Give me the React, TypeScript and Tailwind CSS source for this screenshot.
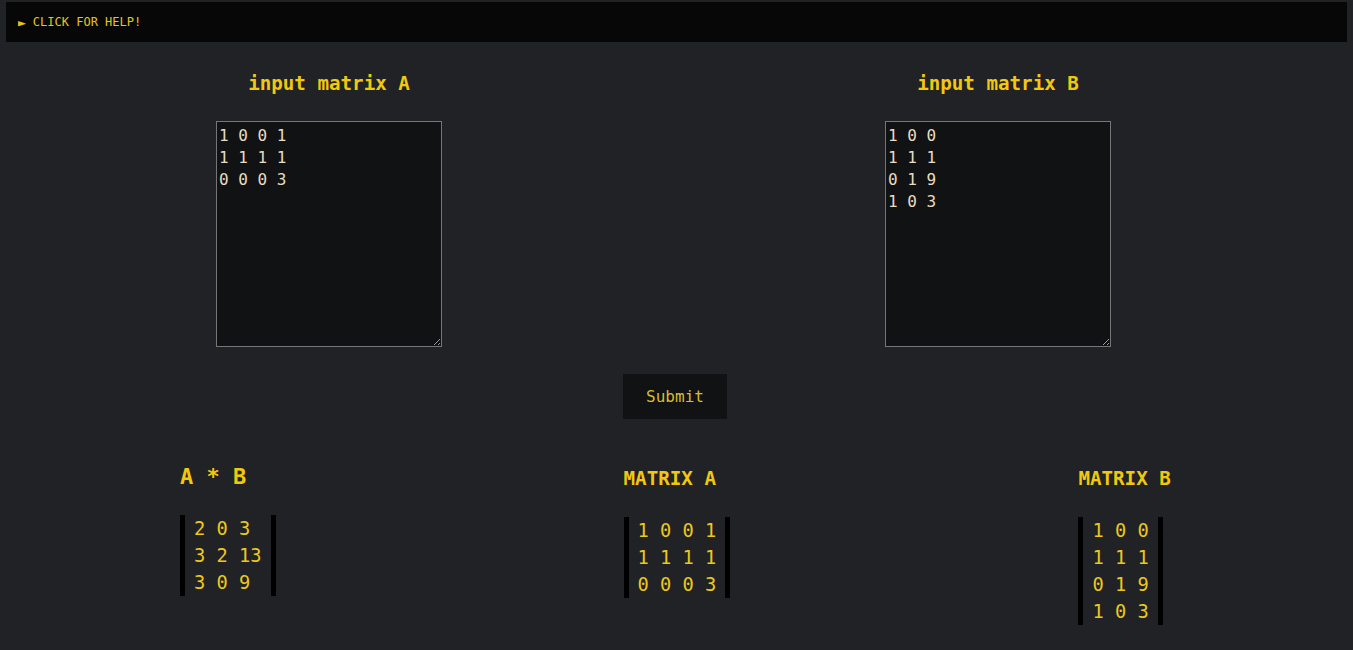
import React from "react";

const matA = "1 0 0 1\n1 1 1 1\n0 0 0 3";
const matB = "1 0 0\n1 1 1\n0 1 9\n1 0 3";
const product = "2 0 3\n3 2 13\n3 0 9";

const Bracket = ({ text }: { text: string }) => (
  <div className="inline-block border-l-[5px] border-r-[5px] border-black px-[9px] text-[18.72px] leading-[27px] text-[#ecc81c] whitespace-pre">
    {text}
  </div>
);

const InputBox = ({ label, value }: { label: string; value: string }) => (
  <div className="flex flex-col items-center w-[226px]">
    <h3 className="h-[22px] text-[19.2px] leading-[22px] font-bold text-[#f2c80f] whitespace-nowrap">
      {label}
    </h3>
    <textarea
      defaultValue={value}
      spellCheck={false}
      className="mt-[26px] w-[226px] h-[226px] border border-[#767676] bg-[#111214] pt-[3px] px-[2px] pb-[2px] text-[16px] leading-[22px] text-[#eadcc0] outline-none"
      style={{ fontFamily: "inherit" }}
    />
  </div>
);

export default function App() {
  return (
    <div
      className="min-h-screen bg-[#202226] pt-[2px] px-[6px]"
      style={{ fontFamily: '"DejaVu Sans Mono", "Liberation Mono", monospace' }}
    >
      <div className="h-[40px] bg-[#070707] flex items-center pl-[12px] text-[12px] text-[#e6c41c]">
        <span className="text-[13px] mr-[7px] leading-none">►</span>
        <span>CLICK FOR HELP!</span>
      </div>

      <div className="mt-[31px] flex pl-[210px] gap-[443px]">
        <InputBox label="input matrix A" value={matA} />
        <InputBox label="input matrix B" value={matB} />
      </div>

      <div className="mt-[27px] flex justify-center pr-[3px]">
        <button className="w-[104px] h-[45px] bg-[#111214] text-[16px] text-[#d8bc2c]">
          Submit
        </button>
      </div>

      <div className="mt-[44px] flex items-start pl-[174px] gap-[348px]">
        <div className="flex flex-col items-start">
          <h2 className="h-[28px] text-[22px] leading-[28px] font-bold text-[#f2c80f] whitespace-nowrap">
            A * B
          </h2>
          <div className="mt-[24px]">
            <Bracket text={product} />
          </div>
        </div>
        <div className="flex flex-col items-start">
          <h3 className="mt-[5px] h-[22px] text-[19.2px] leading-[22px] font-bold text-[#f2c80f] whitespace-nowrap">
            MATRIX A
          </h3>
          <div className="mt-[27px]">
            <Bracket text={matA} />
          </div>
        </div>
        <div className="flex flex-col items-start">
          <h3 className="mt-[5px] h-[22px] text-[19.2px] leading-[22px] font-bold text-[#f2c80f] whitespace-nowrap">
            MATRIX B
          </h3>
          <div className="mt-[27px]">
            <Bracket text={matB} />
          </div>
        </div>
      </div>
    </div>
  );
}
